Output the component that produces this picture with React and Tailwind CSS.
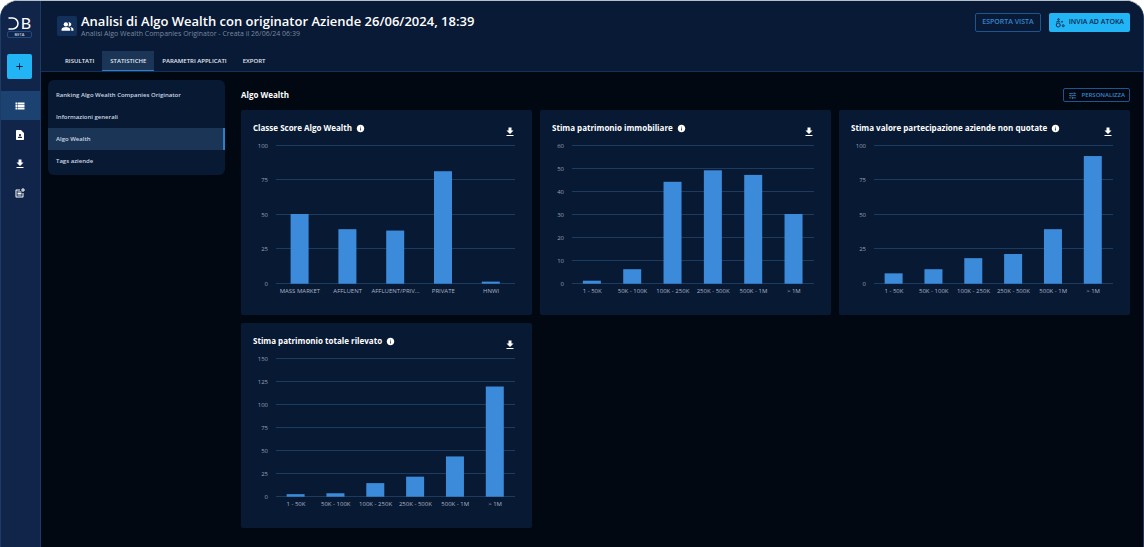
import { MdAdd, MdContactPage, MdFileDownload, MdInfo, MdPeopleAlt, MdPostAdd, MdTune, MdViewList } from 'react-icons/md';

const navItems = [
  { label: 'Liste', Icon: MdViewList, active: true },
  { label: 'Contatti', Icon: MdContactPage },
  { label: 'Download', Icon: MdFileDownload },
  { label: 'Nuova analisi', Icon: MdPostAdd },
];

const tabs = ['RISULTATI', 'STATISTICHE', 'PARAMETRI APPLICATI', 'EXPORT'];

const sections = ['Ranking Algo Wealth Companies Originator', 'Informazioni generali', 'Algo Wealth', 'Tags aziende'];

const ranges = ['1 - 50K', '50K - 100K', '100K - 250K', '250K - 500K', '500K - 1M', '> 1M'];

const charts = [
  {
    title: 'Classe Score Algo Wealth',
    max: 100,
    step: 25,
    left: 35,
    labels: ['MASS MARKET', 'AFFLUENT', 'AFFLUENT/PRIV...', 'PRIVATE', 'HNWI'],
    values: [50, 39, 38, 81, 1],
  },
  { title: 'Stima patrimonio immobiliare', max: 60, step: 10, left: 32, labels: ranges, values: [1, 6, 44, 49, 47, 30] },
  {
    title: 'Stima valore partecipazione aziende non quotate',
    max: 100,
    step: 25,
    left: 35,
    labels: ranges,
    values: [7, 10, 18, 21, 39, 92],
  },
  { title: 'Stima patrimonio totale rilevato', max: 150, step: 25, left: 35, labels: ranges, values: [2, 3, 14, 21, 43, 119] },
];

function BarChart({ chart }) {
  const top = 7;
  const height = 138;
  const right = 274;
  const band = (right - chart.left) / chart.values.length;
  const ticks = [];
  for (let t = 0; t <= chart.max; t += chart.step) ticks.push(t);
  const y = (v) => top + height - (v / chart.max) * height;

  return (
    <svg viewBox="0 0 291 177" className="block w-full" role="img" aria-label={chart.title}>
      {ticks.map((t) => {
        const line = Math.floor(y(t)) + 0.5;
        return (
          <g key={t}>
            <line x1={chart.left} x2={right} y1={line} y2={line} className="stroke-[#1d3a5f]" strokeWidth="1" />
            <text x={chart.left - 8} y={Math.round(line + 2)} textAnchor="end" className="fill-[#94a1b6] text-[6px]">
              {t}
            </text>
          </g>
        );
      })}
      {chart.values.map((v, i) => {
        const center = chart.left + band * (i + 0.5);
        return (
          <g key={chart.labels[i]}>
            <rect x={center - 9.3} y={y(v)} width="18" height={top + height - y(v) + 0.7} className="fill-[#3c8bdb]" />
            <text x={center} y="155" textAnchor="middle" className="fill-[#a9b4c6] text-[6px]">
              {chart.labels[i]}
            </text>
          </g>
        );
      })}
    </svg>
  );
}

function ChartCard({ chart }) {
  return (
    <section className="rounded-xs bg-[#081934]">
      <header className="flex justify-between px-4 pt-[10px]">
        <h3 className="-ml-1 flex h-[18px] items-start text-[8px] leading-4 font-bold text-white">
          {chart.title}
          <MdInfo className="mt-1 ml-1 size-[9px]" />
        </h3>
        <button type="button" aria-label={`Scarica ${chart.title}`} className="self-end text-white">
          <MdFileDownload className="size-3" />
        </button>
      </header>
      <BarChart chart={chart} />
    </section>
  );
}

function Logo() {
  return (
    <div className="flex flex-col items-center">
      <div className="flex h-4 items-center gap-[2px] text-white">
        <svg viewBox="0 0 11 13" className="h-[13px] w-[11px]" fill="none" stroke="currentColor" strokeWidth="1.5" aria-hidden="true">
          <path d="M0.5 1H4.5A5.5 5.5 0 0 1 4.5 12H0.5" />
        </svg>
        <span className="font-['Lato'] text-[16px] leading-4">B</span>
      </div>
      <span className="flex h-[7px] w-[25px] items-center justify-center rounded-xs border border-[#1f4a7d] text-[4px] font-semibold text-slate-300">
        BETA
      </span>
    </div>
  );
}

function AtokaIcon() {
  return (
    <svg viewBox="0 0 20 20" className="size-[10px]" fill="none" stroke="currentColor" strokeWidth="2" aria-hidden="true">
      <circle cx="6.5" cy="14" r="4" />
      <circle cx="16.5" cy="15.5" r="2" />
      <circle cx="7" cy="3" r="1.6" />
      <path d="M2.5 8.5C4.5 6 8.5 6 10.5 8.5" />
      <circle cx="14" cy="7.5" r="1" />
    </svg>
  );
}

function Sidebar() {
  return (
    <aside className="flex w-10 shrink-0 flex-col border-r border-[#1c3c66] bg-[#11254b] pt-[14px]">
      <div className="flex flex-col items-center pr-[2px]">
        <Logo />
        <button
          type="button"
          aria-label="Aggiungi"
          className="mt-4 flex size-[25px] items-center justify-center rounded-xs bg-[#22b5f5] text-[#0a1a36]"
        >
          <MdAdd className="size-[11px]" />
        </button>
      </div>
      <nav className="mt-3">
        {navItems.map(({ label, Icon, active }) => (
          <a
            key={label}
            href="#"
            aria-label={label}
            className={`flex h-[29px] items-center justify-center pr-[2px] text-white ${active ? 'bg-[#1b4270]' : ''}`}
          >
            <Icon className="size-3" />
          </a>
        ))}
      </nav>
    </aside>
  );
}

function Header() {
  return (
    <header className="border-b border-[#15305a] bg-[#081a35]">
      <div className="flex items-start justify-between pt-3 pr-[13px] pl-4">
        <div className="flex items-start gap-1">
          <div className="mt-[3px] flex size-5 items-center justify-center rounded-xs bg-[#12305a] text-white">
            <MdPeopleAlt className="size-[13px]" />
          </div>
          <div>
            <h1 className="text-[13px] leading-4 font-semibold text-white">
              Analisi di Algo Wealth con originator Aziende 26/06/2024, 18:39
            </h1>
            <p className="text-[7px] leading-[10px] text-[#7987a0]">
              Analisi Algo Wealth Companies Originator - Creata il 26/06/24 06:39
            </p>
          </div>
        </div>
        <div className="flex gap-2 text-[7px] font-semibold">
          <button type="button" className="h-[19px] rounded-xs border border-[#1d5590] px-[6px] text-[#3587cf]">
            ESPORTA VISTA
          </button>
          <button type="button" className="flex h-[19px] items-center gap-1 rounded-xs bg-[#22b5f5] px-[6px] text-[#0a2a52]">
            <AtokaIcon />
            INVIA AD ATOKA
          </button>
        </div>
      </div>
      <nav className="mt-3 flex pl-4">
        {tabs.map((tab) => (
          <a
            key={tab}
            href="#"
            className={`flex h-5 items-center border-b px-2 pt-[2px] text-[6px] font-semibold text-slate-200 ${
              tab === 'STATISTICHE' ? 'border-[#2f7fc4] bg-[#1b3557]' : 'border-transparent'
            }`}
          >
            {tab}
          </a>
        ))}
      </nav>
    </header>
  );
}

function App() {
  return (
    <div className="min-h-screen bg-white font-['Open_Sans',sans-serif]">
      <div className="flex min-h-screen overflow-hidden rounded-t-[18px] border-x border-t border-x-[#1c3c66] border-t-[#b4c0ca] bg-[#020812]">
        <Sidebar />
        <div className="min-w-0 flex-1">
          <Header />
          <div className="flex items-start gap-4 pt-2 pr-[13px] pl-[7px]">
            <nav className="w-[177px] shrink-0 rounded-md bg-[#081934] pt-1 pb-[3px]">
              {sections.map((section) => (
                <a
                  key={section}
                  href="#"
                  className={`flex h-[22px] items-center border-r-2 px-2 text-[6px] font-semibold text-slate-300 ${
                    section === 'Algo Wealth' ? 'border-[#2f7fc4] bg-[#1b3557]' : 'border-transparent'
                  }`}
                >
                  {section}
                </a>
              ))}
            </nav>
            <main className="min-w-0 flex-1">
              <div className="flex h-[30px] items-center justify-between">
                <h2 className="text-[8px] font-bold text-white">Algo Wealth</h2>
                <button
                  type="button"
                  className="flex h-[14px] items-center gap-1 rounded-xs border border-[#1d5590] px-1 text-[6px] font-semibold text-[#3587cf]"
                >
                  <MdTune className="size-[9px]" />
                  PERSONALIZZA
                </button>
              </div>
              <div className="grid grid-cols-3 gap-2">
                {charts.map((chart) => (
                  <ChartCard key={chart.title} chart={chart} />
                ))}
              </div>
            </main>
          </div>
        </div>
      </div>
    </div>
  );
}

export default App;
